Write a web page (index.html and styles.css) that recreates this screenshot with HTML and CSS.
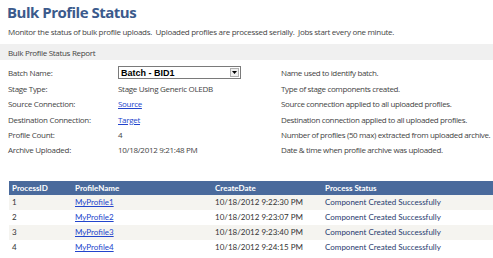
FILE: index.html
```html
<!DOCTYPE html>
<html lang="en">
<head>
  <meta charset="UTF-8" />
  <title>Bulk Profile Status</title>
  <link rel="stylesheet" href="styles.css">
</head>
<body>
<div class="page">
  <h1>Bulk Profile Status</h1>
  <p class="intro">Monitor the status of bulk profile uploads.&nbsp; Uploaded profiles are processed serially.&nbsp; Jobs start every one minute.</p>
  <div class="section-title">Bulk Profile Status Report</div>
  <div class="form">
    <div class="label">Batch Name:</div>
    <div class="value">
      <div class="select">
        <span>Batch - BID1</span>
        <span class="arrow"><svg width="5" height="3" viewBox="0 0 5 3"><path d="M0 0h5L2.5 3z" fill="#000"/></svg></span>
      </div>
    </div>
    <div class="desc">Name used to identify batch.</div>

    <div class="label">Stage Type:</div>
    <div class="value">Stage Using Generic OLEDB</div>
    <div class="desc">Type of stage components created.</div>

    <div class="label">Source Connection:</div>
    <div class="value"><a href="#">Source</a></div>
    <div class="desc">Source connection applied to all uploaded profiles.</div>

    <div class="label">Destination Connection:</div>
    <div class="value"><a href="#">Target</a></div>
    <div class="desc">Destination connection applied to all uploaded profiles.</div>

    <div class="label">Profile Count:</div>
    <div class="value">4</div>
    <div class="desc">Number of profiles (50 max) extracted from uploaded archive.</div>

    <div class="label">Archive Uploaded:</div>
    <div class="value">10/18/2012 9:21:48 PM</div>
    <div class="desc">Date &amp; time when profile archive was uploaded.</div>
  </div>

  <table class="grid">
    <tr>
      <th class="c-id">ProcessID</th>
      <th class="c-name">ProfileName</th>
      <th class="c-date">CreateDate</th>
      <th>Process Status</th>
    </tr>
    <tr class="alt">
      <td>1</td><td><a href="#">MyProfile1</a></td><td>10/18/2012 9:22:30 PM</td><td class="status">Component Created Successfully</td>
    </tr>
    <tr>
      <td>2</td><td><a href="#">MyProfile2</a></td><td>10/18/2012 9:23:07 PM</td><td class="status">Component Created Successfully</td>
    </tr>
    <tr class="alt">
      <td>3</td><td><a href="#">MyProfile3</a></td><td>10/18/2012 9:23:40 PM</td><td class="status">Component Created Successfully</td>
    </tr>
    <tr>
      <td>4</td><td><a href="#">MyProfile4</a></td><td>10/18/2012 9:24:15 PM</td><td class="status">Component Created Successfully</td>
    </tr>
  </table>
</div>
</body>
</html>
```

FILE: styles.css
```css
body {
  margin: 0;
  padding: 0;
  font-family: "Open Sans", "Noto Sans", sans-serif;
  font-size: 8px;
  letter-spacing: -0.3px;
  color: #444;
  background: #fff;
}
.page {
  padding-top: 1px;
}
h1 {
  margin: 0 0 0 7px;
  font-size: 15px;
  letter-spacing: -0.5px;
  font-weight: bold;
  color: #3b5a8c;
  line-height: 22px;
}
.intro {
  margin: 3px 0 0 8px;
  line-height: 12px;
  white-space: nowrap;
}
.section-title {
  margin-top: 6px;
  background: #f0f0f0;
  padding: 0 8px;
  height: 16px;
  line-height: 17px;
}
.form {
  display: grid;
  grid-template-columns: 110px 163px 1fr;
  grid-auto-rows: 15.45px;
  margin: 5px 0 0 8px;
  align-items: center;
  white-space: nowrap;
}
.form a {
  color: #2244cc;
}
.desc {
  letter-spacing: -0.36px;
}
.select {
  width: 119px;
  height: 11px;
  border: 1px solid #7a7a7a;
  display: flex;
  align-items: center;
  justify-content: space-between;
  font-family: "Liberation Sans", Arial, sans-serif;
  font-weight: bold;
  font-size: 9px;
  letter-spacing: 0;
  color: #000;
  padding-left: 2px;
}
.arrow {
  width: 9px;
  height: 9px;
  margin-right: 1px;
  border: 1px solid #b0b0b0;
  background: #efefef;
  display: flex;
  align-items: center;
  justify-content: center;
  box-sizing: border-box;
}
.grid {
  margin: 23px 0 0 9px;
  width: 484px;
  border-collapse: collapse;
  font-family: Lato, "Open Sans", sans-serif;
  font-size: 8px;
  letter-spacing: 0;
}
.grid th {
  background: #4a6a9c;
  color: #fff;
  font-weight: bold;
  text-align: left;
  height: 14px;
  padding: 0 3px;
}
.grid td {
  height: 15px;
  padding: 0 3px;
  color: #333;
}
.grid tr.alt td {
  background: #f5f4f0;
}
.grid a {
  color: #2244cc;
}
.grid td.status {
  color: #1f3a6e;
}
.c-id { width: 57px; }
.c-name { width: 134px; }
.c-date { width: 104px; }
```
